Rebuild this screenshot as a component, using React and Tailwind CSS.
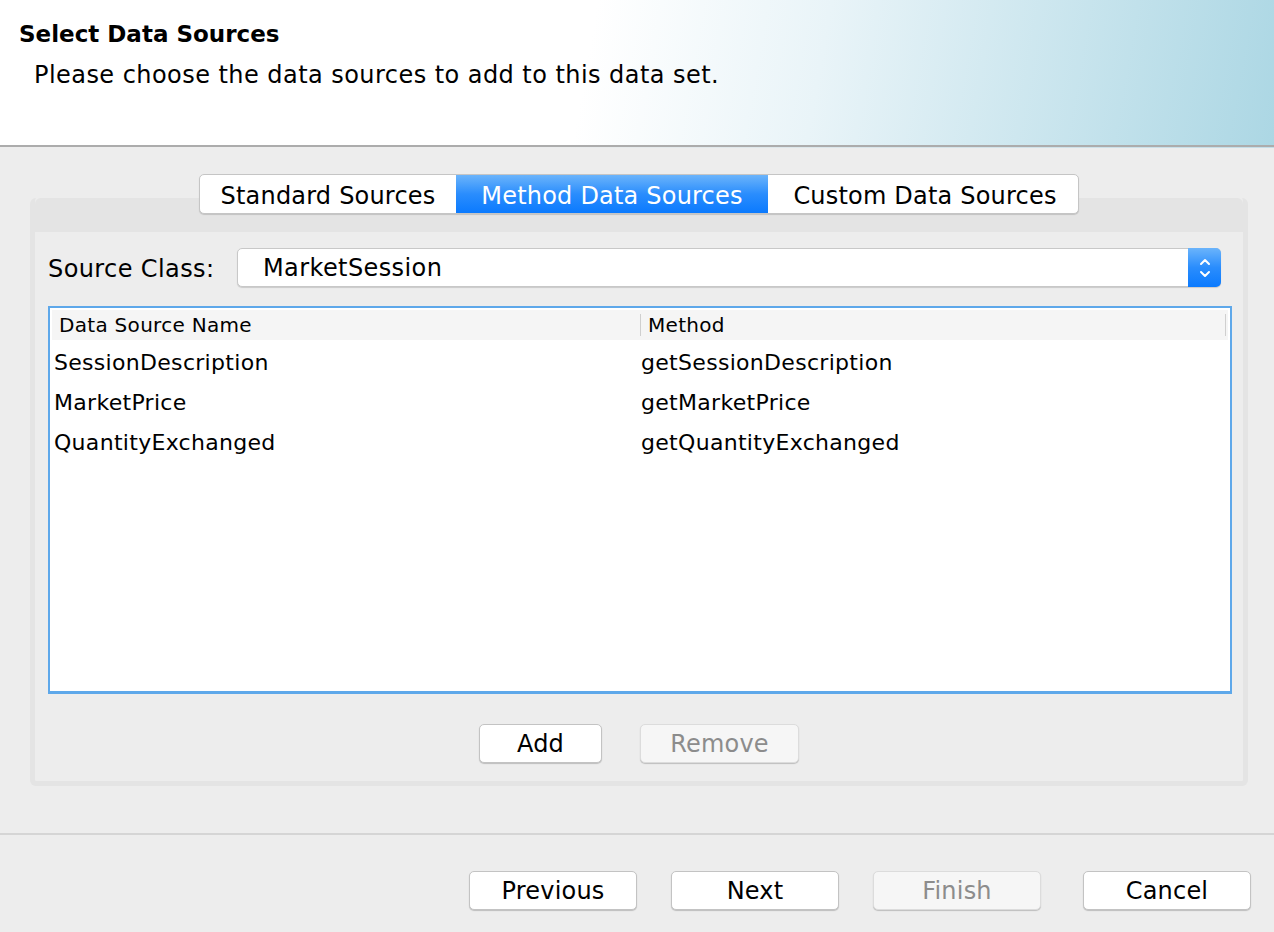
import React from "react";

const ROWS = [
  ["SessionDescription", "getSessionDescription"],
  ["MarketPrice", "getMarketPrice"],
  ["QuantityExchanged", "getQuantityExchanged"],
];

function Btn({ children, disabled, className = "" }) {
  return (
    <button
      className={`h-[39px] rounded-[5px] border pt-[1px] text-[24px] leading-none tracking-[0.2px] shadow-[0_1px_1px_rgba(0,0,0,0.2)] ${
        disabled ? "border-[#dcdcdc] bg-[#f6f6f6] text-[#8c8c8c]" : "border-[#c3c3c3] bg-white text-black"
      } ${className}`}
    >
      {children}
    </button>
  );
}

export default function App() {
  return (
    <div
      className="flex h-[932px] w-[1274px] flex-col bg-[#ededed] text-black"
      style={{ fontFamily: '"DejaVu Sans", "Noto Sans", sans-serif' }}
    >
      {/* Header */}
      <div className="h-[145px] bg-[linear-gradient(100deg,#ffffff_0%,#ffffff_46%,#e9f4f8_64%,#acd7e4_100%)] pl-[19px] pt-[19px]">
        <div className="text-[23px] font-bold leading-[30px]">Select Data Sources</div>
        <div className="mt-[11px] pl-[15px] text-[24px] leading-[30px] tracking-[0.45px]">
          Please choose the data sources to add to this data set.
        </div>
      </div>
      <div className="h-[2px] bg-[#acacac]" />
      <div className="h-[1px] bg-[linear-gradient(90deg,#ededed_40%,#c3dde8_100%)]" />

      {/* Tab panel */}
      <div className="relative ml-[30px] mr-[26px] mt-[50px] h-[588px] rounded-[6px] border-[5px] border-t-0 border-[#e4e4e4] bg-[#ededed]">
        <div className="h-[34px] rounded-t-[6px] bg-[#e4e4e4]" />
        {/* tabs */}
        <div className="absolute left-[164px] top-[-24px] flex h-[40px] rounded-[5px] border border-[#c5c5c5] bg-white text-[24px] leading-none tracking-[0.2px] shadow-[0_1px_1px_rgba(0,0,0,0.15)]">
          <div className="flex w-[256px] items-center justify-center pt-[3px]">Standard Sources</div>
          <div className="flex w-[312px] items-center justify-center bg-[linear-gradient(180deg,#6bb4fb_0%,#2a8dfd_50%,#0b7afe_100%)] pt-[3px] text-white">
            Method Data Sources
          </div>
          <div className="flex w-[310px] items-center justify-center pt-[3px] pl-[4px]">Custom Data Sources</div>
        </div>

        <div className="pl-[13px] pr-[11px]">
          {/* Source class */}
          <div className="mt-[16px] flex items-center">
            <span className="w-[189px] pt-[2px] text-[24px] leading-none tracking-[0.4px]">Source Class:</span>
            <div className="mr-[11px] flex h-[39px] flex-1 items-center rounded-[5px] border border-[#c8c8c8] bg-white shadow-[0_1px_1px_rgba(0,0,0,0.15)]">
              <span className="flex-1 pl-[25px] text-[24px] leading-none tracking-[0.4px]">MarketSession</span>
              <div className="-my-px -mr-px flex h-[39px] w-[33px] items-center justify-center rounded-r-[5px] bg-[linear-gradient(180deg,#6bb4fb_0%,#2a8dfd_50%,#0b7afe_100%)]">
                <svg width="14" height="24" viewBox="0 0 14 24" fill="none" stroke="white" strokeWidth="2" strokeLinecap="round" strokeLinejoin="round">
                  <path d="M3 8 L7 4 L11 8" />
                  <path d="M3 16 L7 20 L11 16" />
                </svg>
              </div>
            </div>
          </div>

          {/* Table */}
          <div className="mt-[19px] h-[388px] border-2 border-b-[3px] border-[#5ea8ea] bg-white">
            <div className="mx-[2px] mt-[2px] flex h-[30px] items-center bg-[#f5f5f5] text-[20px] leading-none tracking-[0.3px]">
              <div className="w-[588px] pl-[7px]">Data Source Name</div>
              <div className="h-[22px] w-px bg-[#cfcfcf]" />
              <div className="flex-1 pl-[7px]">Method</div>
              <div className="mr-[2px] h-[22px] w-px bg-[#cfcfcf]" />
            </div>
            <div className="pt-[3px]">
              {ROWS.map(([name, method]) => (
                <div key={name} className="flex h-[40px] items-center text-[22px] leading-none tracking-[0.3px]">
                  <div className="w-[591px] pl-[4px]">{name}</div>
                  <div className="flex-1">{method}</div>
                </div>
              ))}
            </div>
          </div>

          {/* Add / Remove */}
          <div className="mt-[30px] flex justify-center gap-[38px] pr-[2px]">
            <Btn className="w-[123px]">Add</Btn>
            <Btn disabled className="w-[159px]">Remove</Btn>
          </div>
        </div>
      </div>

      {/* Footer */}
      <div className="mt-[47px] h-[2px] bg-[#d5d5d5]" />
      <div className="mt-[36px] flex justify-end pr-[23px]">
        <Btn className="w-[168px]">Previous</Btn>
        <Btn className="ml-[34px] w-[168px]">Next</Btn>
        <Btn disabled className="ml-[34px] w-[168px]">Finish</Btn>
        <Btn className="ml-[42px] w-[168px]">Cancel</Btn>
      </div>
    </div>
  );
}
